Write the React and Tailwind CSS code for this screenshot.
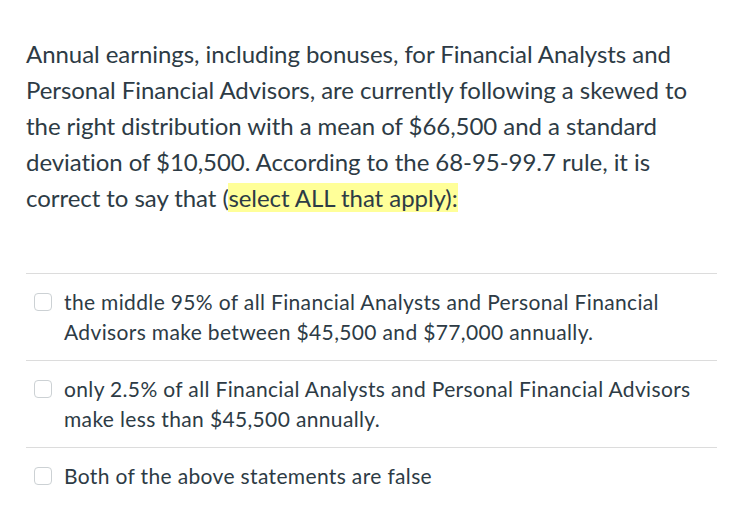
export default function App() {
  const answers = [
    "the middle 95% of all Financial Analysts and Personal Financial Advisors make between $45,500 and $77,000 annually.",
    "only 2.5% of all Financial Analysts and Personal Financial Advisors make less than $45,500 annually.",
    "Both of the above statements are false",
  ];
  return (
    <div className="w-[734px] h-[520px] bg-white overflow-hidden text-[#2d3b45]" style={{ fontFamily: "Lato, 'Noto Sans', sans-serif" }}>
      <div className="pl-[26px] pr-[17px] pt-[36px]">
        <p className="text-[24px] leading-[36px] tracking-[-0.05px] w-[680px]">
          Annual earnings, including bonuses, for Financial Analysts and Personal Financial Advisors, are currently following a skewed to the right distribution with a mean of $66,500 and a standard deviation of $10,500. According to the 68-95-99.7 rule, it is correct to say that (<span className="bg-[#ffff99]">select ALL that apply):</span>
        </p>
        <div className="mt-[57px]">
          {answers.map((a, i) => (
            <div key={i} className="border-t border-[#dcdcdc] flex items-start pt-[13px] pb-[13px] pl-[8px]">
              <span className="mt-[6px] w-[18px] h-[18px] shrink-0 rounded-[4px] border border-[#ccd1d4] bg-white" />
              <span className="ml-[12px] text-[21px] leading-[30px] tracking-[0.35px] w-[640px]">{a}</span>
            </div>
          ))}
        </div>
      </div>
    </div>
  );
}
